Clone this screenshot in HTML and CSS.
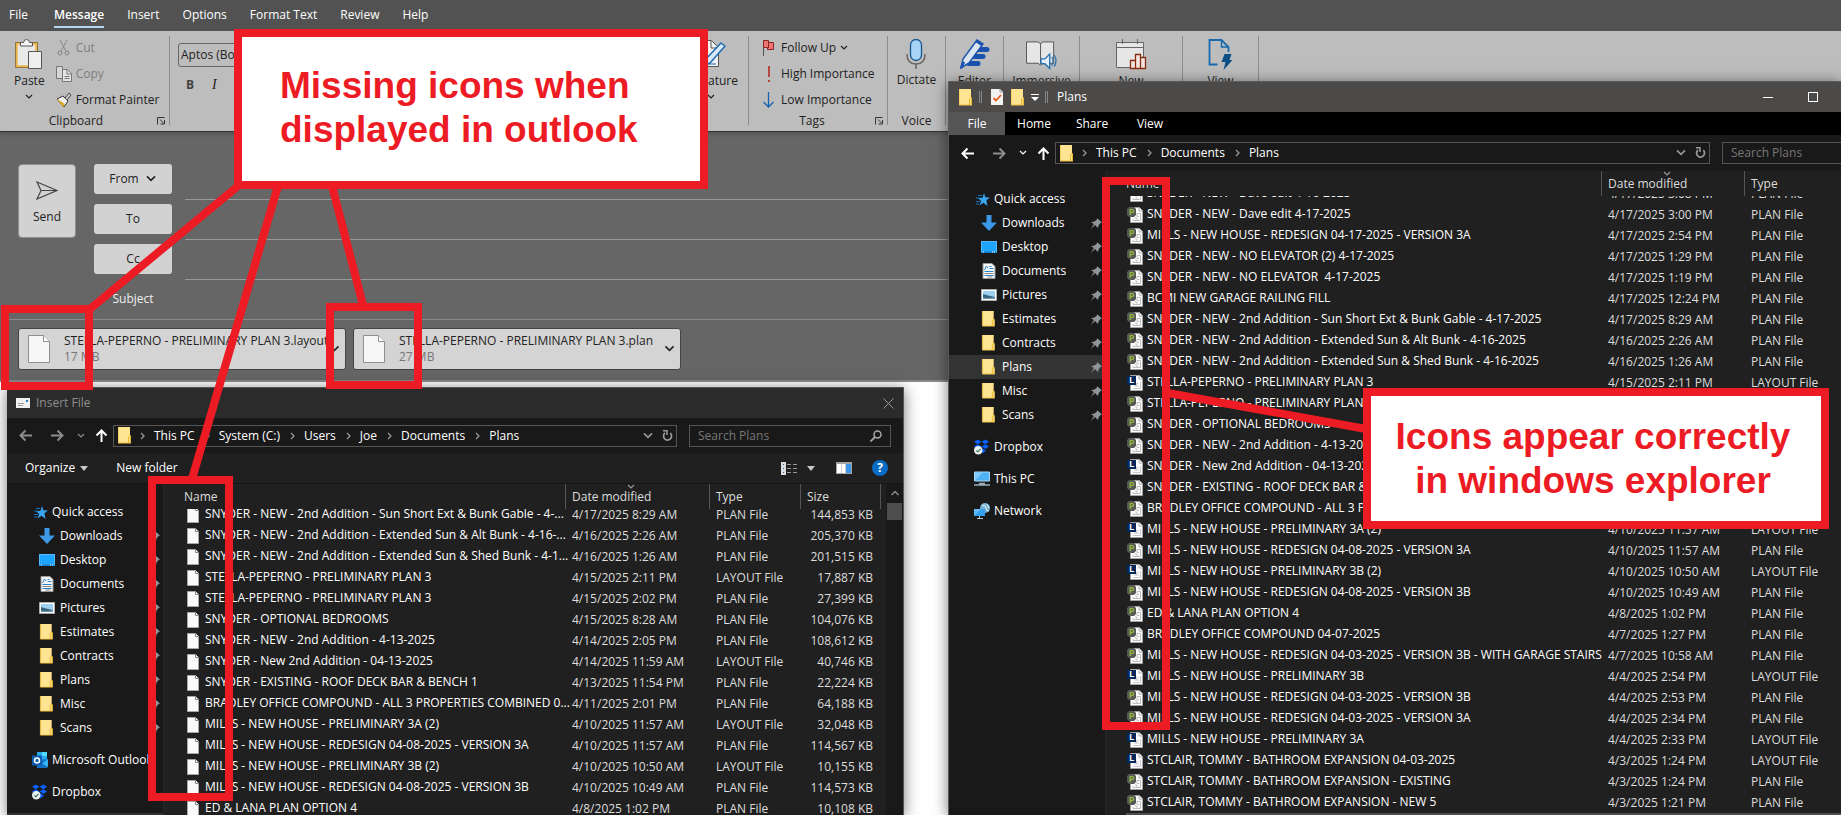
FILE: index.html
```html
<!DOCTYPE html>
<html lang="en">
<head>
<meta charset="utf-8">
<title>Message - Insert File</title>
<link rel="stylesheet" href="styles.css">
</head>
<body>
<svg class="defs" aria-hidden="true">
  <symbol id="folder" viewBox="0 0 14 17"><path d="M0 0h12v9l1 1v6H1L0 16z" fill="#ffe08c"/><path d="M1 1h10v14H1z" fill="#ffe492"/><path d="M0 0v16h13" fill="none" stroke="#efc245" stroke-width="1"/><path d="M10.500 16V10l2-1.500V16" fill="#ffe694" stroke="#e6b52c"/></symbol>
  <symbol id="file" viewBox="0 0 12 16"><path d="M.5.5h8l3 3v12H.5z" fill="#fafafa" stroke="#a8a8a8"/><path d="M8.500.500v3h3" fill="#fff" stroke="#858585"/></symbol>
  <symbol id="plan" viewBox="0 0 16 16"><path d="M3.500.500h9l3 3v12h-12z" fill="#fdfdfd" stroke="#a4a4a4"/><path d="M12 1v3h3" fill="none" stroke="#aaa"/><path d="M6 12v1.500h7.500V6.500H10M10 6.500v3h2M10 13v-2H8" fill="none" stroke="#bdbdbd"/><path d="M2 0h5l2 2v6L7 10H2L0 8V2z" fill="#575957"/><text x="2" y="8" class="badge-p">P</text></symbol>
  <symbol id="layout" viewBox="0 0 16 16"><path d="M3.500.500h9l3 3v12h-12z" fill="#fdfdfd" stroke="#a4a4a4"/><path d="M12 1v3h3" fill="none" stroke="#aaa"/><path d="M6 13.500h7.500V7M7 11h5M9.500 11V8.500h2" fill="none" stroke="#c4c9d0"/><path d="M0 1h9v9H0z" fill="#04285c"/><text x="2" y="8" class="badge-l">L</text></symbol>
  <symbol id="star" viewBox="0 0 14 13"><path d="M8 0l1.400 4.200 4.600.300-3.600 2.700L11.500 13 7.500 9.800 3.500 12.500 5.200 8 2 5.200l4.500-.500z" fill="#39a5f2"/><path d="M2 2.500h4M0 5h4M0 8.500h4M0 11h3" stroke="#1d74b8"/></symbol>
  <symbol id="down" viewBox="0 0 16 16"><path d="M5.500 0h5v7.500H16L8 16 0 7.500h5.500z" fill="#3d98e8"/></symbol>
  <symbol id="desktop" viewBox="0 0 16 12"><path d="M0 0h16v12H0z" fill="#1296f0"/><path d="M.5.5h15v10H.5z" fill="#1ea5ff" stroke="#57b9fa"/><path d="M1 11h14" stroke="#0564b4"/><path d="M2 11h1M11 11h1M13 11h1" stroke="#fff"/></symbol>
  <symbol id="docs" viewBox="0 0 13 16"><path d="M.5.500h9l3 3v12H.5z" fill="#f7f7f7" stroke="#9a9a9a"/><path d="M2 7l2-4 1.500 2M7 3.500h2M7 5.500h4M2 8.500h9M2 12.500h9" fill="none" stroke="#2c83c5"/><path d="M2 10.500h9M5 14h5" stroke="#888"/></symbol>
  <symbol id="pics" viewBox="0 0 16 12"><path d="M.5.500h15v11H.5z" fill="#fff" stroke="#aaa"/><path d="M2 2h12v8H2z" fill="#9dd1f2"/><path d="M2 5l5 1.500L14 8v2H2z" fill="#36647f"/><path d="M2 8.500l6 .5 6-1v2H2z" fill="#6d93a6"/></symbol>
  <symbol id="pin" viewBox="0 0 11 11"><path d="M6 0l5 4.500-1.500.500-2 2.500L7 10 4 7 0 11l2.800-5L0 4l3.500-.500L6 1.500z" fill="#8d969c"/></symbol>
  <symbol id="dropbox" viewBox="0 0 17 16"><path d="M4 0l4 2.500L4 5 0 2.500zM12 0l4 2.500L12 5 8 2.500zM4 5l4 2.500L4 10 0 7.500zM12 5l4 2.500-4 2.500-4-2.500zM8 9l5 3-4.500 3z" fill="#0a61fe"/><circle cx="4.500" cy="11.500" r="4.500" fill="#e9f0ee"/><path d="M2.500 11.500l1.500 1.700 3-3.200" fill="none" stroke="#3a7b60" stroke-width="1.300"/></symbol>
  <symbol id="pc" viewBox="0 0 16 15"><path d="M.5.500h15v9H.5z" fill="#4db1f3" stroke="#a9d9f5"/><path d="M1 9V1h8z" fill="#83cbf8"/><path d="M5 12h6M0 13.500h16" stroke="#9bb0bc" stroke-width="1.500"/></symbol>
  <symbol id="network" viewBox="0 0 16 16"><circle cx="11" cy="5" r="5" fill="#79b2d2"/><path d="M8 2q4 0 4 3t3 3M13 1l2 4" fill="none" stroke="#dceef5"/><path d="M0 6h11v7H0z" fill="#34a1ee"/><path d="M0 13V6h7z" fill="#62bcf7"/><path d="M3 15.500h6M5.500 13v2" stroke="#b5cad6"/></symbol>
  <symbol id="outlook" viewBox="0 0 16 16"><path d="M5 0h10v8H5z" fill="#28a8ea"/><path d="M10 0h5v4h-5z" fill="#50d9ff"/><path d="M4 8l12-1v7l-1 2H5z" fill="#1272c4"/><path d="M16 7v8l-6-3.500z" fill="#38b4f2"/><rect y="3.500" width="10" height="10" fill="#0d5cae"/><circle cx="5" cy="8.500" r="2.500" fill="none" stroke="#fff" stroke-width="1.500"/></symbol>
  <symbol id="back" viewBox="0 0 13 12"><path d="M13 6H1.500M6.500 1l-5 5 5 5" fill="none" stroke="currentColor" stroke-width="2"/></symbol>
  <symbol id="fwd" viewBox="0 0 13 12"><path d="M0 6h11.500M6.500 1l5 5-5 5" fill="none" stroke="currentColor" stroke-width="2"/></symbol>
  <symbol id="up" viewBox="0 0 12 13"><path d="M6 13V1.500M1 6.500l5-5 5 5" fill="none" stroke="currentColor" stroke-width="2"/></symbol>
  <symbol id="chev" viewBox="0 0 8 6"><path d="M1 1l3 3 3-3" fill="none" stroke="currentColor" stroke-width="1.200"/></symbol>
  <symbol id="next" viewBox="0 0 5 8"><path d="M1 1l3 3-3 3" fill="none" stroke="currentColor" stroke-width="1.300"/></symbol>
  <symbol id="reload" viewBox="0 0 11 12"><path d="M8.300 3.200A4 4 0 1 1 3 3" fill="none" stroke="currentColor" stroke-width="1.700"/><path d="M1 .8h4V5" fill="none" stroke="currentColor" stroke-width="1.500"/></symbol>
  <symbol id="launch" viewBox="0 0 9 8"><path d="M.5 7.500v-7h7M3 2.500l4 4M3.500 7h4V3" fill="none" stroke="#333"/></symbol>
  <symbol id="page" viewBox="0 0 22 28"><path d="M.5.500h15l6 6v21H.5z" fill="#f6f6f6" stroke="#8f8f8f"/><path d="M15.500.500v6h6" fill="#fff" stroke="#8f8f8f"/></symbol>
</svg>

<main class="desktop">
  <section class="mail" aria-label="Message">
    <nav class="tabs">
      <button>File</button><button class="on">Message</button><button>Insert</button><button>Options</button><button>Format Text</button><button>Review</button><button>Help</button>
    </nav>
    <div class="ribbon">
      <div class="group clip">
        <div class="tools">
          <button class="big"><svg class="ic-paste" viewBox="0 0 28 31"><path d="M1.500 4.500h20v23h-20z" fill="#e9e9e9" stroke="#eab54a" stroke-width="2.500"/><path d="M.5 3.500h22v25H.5z" fill="none" stroke="#5c4a22" stroke-width=".6"/><path d="M5.500 7V3.500h3q.500-3 3-3t3 3h3V7z" fill="#f4f4f4" stroke="#555"/><path d="M13.500 12.500h13v17h-13z" fill="#eee" stroke="#555"/></svg><span>Paste</span><svg class="chev"><use href="#chev"/></svg></button>
          <div class="stack">
            <button class="off"><svg class="ic16" viewBox="0 0 16 16"><path d="M4 0l6 11M11 0L5 11" stroke="#858585" fill="none"/><circle cx="4" cy="13" r="2" fill="none" stroke="#858585"/><circle cx="11" cy="13" r="2" fill="none" stroke="#858585"/></svg>Cut</button>
            <button class="off"><svg class="ic16" viewBox="0 0 16 16"><path d="M.5.500h6v12h-6z" fill="#d6d6d6" stroke="#777"/><path d="M6.500 3.500h5l4 4v8h-9z" fill="#e4e4e4" stroke="#777"/><path d="M11 4v4h4M8.500 10.500h5M8.500 12.500h5" fill="none" stroke="#777"/></svg>Copy</button>
            <button><svg class="ic16" viewBox="0 0 16 16"><path d="M1 7l6-3 5 5-4 6z" fill="#f2f2f2" stroke="#333"/><path d="M1 7l8 5-2 3z" fill="#e3a823"/><path d="M9 6l4-5 2 2-4 5z" fill="#ccc" stroke="#444"/></svg>Format Painter</button>
          </div>
        </div>
        <div class="caption">Clipboard<button class="launch" aria-label="Clipboard options"><svg><use href="#launch"/></svg></button></div>
      </div>
      <div class="group font">
        <select aria-label="Font"><option>Aptos (Body)</option></select>
        <div class="style"><button class="b">B</button><button class="i">I</button></div>
      </div>
      <div class="group sign">
        <button class="big"><svg class="ic-sign" viewBox="0 0 34 31"><path d="M.5 1.500h17l7 7v19H.5z" fill="#f2f2f2" stroke="#555"/><path d="M17 2v7h7" fill="none" stroke="#555"/><path d="M27 4l4 3-15 17-6 2 2-6z" fill="#d9e9f7" stroke="#2170b5" stroke-width="1.500"/><path d="M3 25h19" stroke="#1b66ad"/></svg><span>Signature</span><svg class="chev"><use href="#chev"/></svg></button>
      </div>
      <div class="group tags">
        <div class="stack">
          <button><svg class="ic16" viewBox="0 0 16 16"><path d="M2.500 0v16" stroke="#555"/><path d="M2.500.500h5v2h5v7h-6v-2h-4z" fill="#ee7474" stroke="#8d2424"/><path d="M7.500 1v7" stroke="#8d2424"/></svg>Follow Up<svg class="chev"><use href="#chev"/></svg></button>
          <button><svg class="ic16" viewBox="0 0 16 16"><path d="M8 0v11M8 14v2" stroke="#b5473f" stroke-width="2"/></svg>High Importance</button>
          <button><svg class="ic16" viewBox="0 0 16 16"><path d="M7.500 0v15M2.500 10l5 5 5-5" fill="none" stroke="#1464b0" stroke-width="1.300"/></svg>Low Importance</button>
        </div>
        <div class="caption">Tags<button class="launch" aria-label="Tag options"><svg><use href="#launch"/></svg></button></div>
      </div>
      <div class="group voice">
        <button class="big"><svg class="ic-mic" viewBox="0 0 20 30"><rect x="4.500" y=".5" width="11" height="21" rx="5.500" fill="#a7d3f5" stroke="#17568f" stroke-width="1.300"/><path d="M1 15q0 10 9 10t9-10M10 25v5" fill="none" stroke="#666" stroke-width="1.500"/></svg><span>Dictate</span></button>
        <div class="caption">Voice</div>
      </div>
      <div class="group editor"><button class="big"><svg class="ic-30" viewBox="0 0 31 31"><path d="M18 8h10a2 2 0 0 1 0 5H16zM14 15h10a2 2 0 0 1 0 5H12zM10 22h9a2 2 0 0 1 0 5H8z" fill="#1a53ae"/><path d="M2 29l2-9L18 1l6 4L10 24z" fill="#dbe5ef" stroke="#1a53ae" stroke-width="1.500"/><path d="M17 2l6 4M2 29l3-6" stroke="#1a53ae" stroke-width="2.500"/></svg><span>Editor</span></button></div>
      <div class="group immersive"><button class="big"><svg class="ic-30" viewBox="0 0 32 31"><path d="M.5 2.500h12l2.500 2 2.500-2h11v22h-11l-2.500 2-2.500-2H.5z" fill="#e6e6e6" stroke="#555"/><path d="M15 4v21" stroke="#555"/><path d="M15.500 20h4l5-5v15l-5-5h-4z" fill="#e3eef7" stroke="#2a73b0" stroke-width="1.400"/><path d="M26.500 18q3 4 0 9M29 16q4 6 0 12" fill="none" stroke="#2a73b0" stroke-width="1.300"/></svg><span>Immersive</span></button></div>
      <div class="group new"><button class="big"><svg class="ic-30" viewBox="0 0 31 31"><path d="M.5 3.500h27v25H.5z" fill="#e6e6e6" stroke="#666"/><path d="M1 8.500h26M6.500 0v5M21.500 0v5" stroke="#666" fill="none"/><path d="M14.500 29.500v-8h5v-6h5v3h5v11zM19.500 22v7M24.500 18v11" fill="#f3e6e0" stroke="#872e12" stroke-width="1.300"/></svg><span>New</span></button></div>
      <div class="group view"><button class="big"><svg class="ic-30" viewBox="0 0 26 31"><path d="M10 25.500H2V1h12l7 7v5" fill="none" stroke="#176aae" stroke-width="1.800"/><path d="M14 1v7h7" fill="none" stroke="#176aae" stroke-width="1.500"/><path d="M17 15h7l-2 6h3l-9 10 2-8h-4z" fill="#0c4f87"/></svg><span>View</span></button></div>
    </div>
    <form class="compose">
      <button type="button" class="send"><svg viewBox="0 0 22 19"><path d="M1 1l20 8.500L1 18l4-8.500zM5 9.500h16" fill="none" stroke="#444" stroke-width="1.200"/></svg>Send</button>
      <button type="button" class="who">From <svg class="chev wide"><use href="#chev"/></svg></button><input aria-label="From">
      <button type="button" class="who">To</button><input aria-label="To">
      <button type="button" class="who">Cc</button><input aria-label="Cc">
      <label for="subject">Subject</label><input id="subject">
    </form>
    <div class="attachments">
      <button class="att"><svg class="ic-page"><use href="#page"/></svg><span class="att-text"><span>STELLA-PEPERNO - PRELIMINARY PLAN 3.layout</span><small>17 MB</small></span><svg class="chev wide"><use href="#chev"/></svg></button>
      <button class="att"><svg class="ic-page"><use href="#page"/></svg><span class="att-text"><span>STELLA-PEPERNO - PRELIMINARY PLAN 3.plan</span><small>27 MB</small></span><svg class="chev wide"><use href="#chev"/></svg></button>
    </div>
  </section>

  <section class="win dialog" aria-label="Insert File">
    <header class="title"><svg class="ic-mail" viewBox="0 0 14 10"><path d="M0 0h14v10H0z" fill="#f0f0f0"/><path d="M2 5.500h6M2 7.500h5" stroke="#999"/><path d="M10 2h2v2h-2z" fill="#2b75bb"/></svg>Insert File<button class="close" aria-label="Close"><svg viewBox="0 0 11 11"><path d="M.5.500l10 10M10.500.500l-10 10" stroke="#999" fill="none"/></svg></button></header>
    <div class="address">
      <button class="nav" aria-label="Back"><svg class="arrow"><use href="#back"/></svg></button><button class="nav" aria-label="Forward"><svg class="arrow"><use href="#fwd"/></svg></button><button class="nav small" aria-label="Recent"><svg class="chev"><use href="#chev"/></svg></button><button class="nav lit" aria-label="Up"><svg class="arrow"><use href="#up"/></svg></button>
      <div class="path"><svg class="ic-folder"><use href="#folder"/></svg><svg class="next"><use href="#next"/></svg><a href="#">This PC</a><svg class="next"><use href="#next"/></svg><a href="#">System (C:)</a><svg class="next"><use href="#next"/></svg><a href="#">Users</a><svg class="next"><use href="#next"/></svg><a href="#">Joe</a><svg class="next"><use href="#next"/></svg><a href="#">Documents</a><svg class="next"><use href="#next"/></svg><a href="#">Plans</a><button class="end" aria-label="Previous locations"><svg class="chev wide"><use href="#chev"/></svg></button><button aria-label="Refresh"><svg class="reload"><use href="#reload"/></svg></button></div>
      <div class="search"><input aria-label="Search Plans" placeholder="Search Plans"><svg class="glass" viewBox="0 0 12 12"><circle cx="7.500" cy="4.500" r="3.500" fill="none" stroke="#a8a8a8" stroke-width="1.500"/><path d="M5 7l-4.500 4.500" stroke="#a8a8a8" stroke-width="1.800"/></svg></div>
    </div>
    <div class="toolbar"><button class="organize">Organize<svg class="tri" viewBox="0 0 8 5"><path d="M0 0h8L4 5z" fill="#c8c8c8"/></svg></button><button>New folder</button>
      <button class="mode" aria-label="Change view"><svg class="ic-view" viewBox="0 0 16 13"><path d="M0 0h5v13H0z" fill="#ddd"/><path d="M2 2h1v1H2zM2 6h1v1H2zM2 10h1v1H2z" fill="#245f9c"/><path d="M6 2.500h4M12 2.500h4M6 6.500h4M12 6.500h4M6 10.500h4M12 10.500h4" stroke="#999"/></svg><svg class="tri" viewBox="0 0 8 5"><path d="M0 0h8L4 5z" fill="#c8c8c8"/></svg></button>
      <button class="pane" aria-label="Preview pane"><svg class="ic-pane" viewBox="0 0 16 12"><path d="M0 0h16v12H0z" fill="#a5a5a5"/><path d="M1 2h4v9H1zM5.500 2h4v9h-4z" fill="#fff"/><path d="M10 2h5v9h-5z" fill="#3c96e8"/></svg></button>
      <button class="help" aria-label="Help">?</button></div>
    <div class="panes">
      <nav class="side">
        <a href="#" class="top"><svg class="ic-star"><use href="#star"/></svg>Quick access</a>
        <a href="#"><svg class="ic16"><use href="#down"/></svg>Downloads<svg class="pin"><use href="#pin"/></svg></a>
        <a href="#"><svg class="ic16"><use href="#desktop"/></svg>Desktop<svg class="pin"><use href="#pin"/></svg></a>
        <a href="#"><svg class="ic16"><use href="#docs"/></svg>Documents<svg class="pin"><use href="#pin"/></svg></a>
        <a href="#"><svg class="ic16"><use href="#pics"/></svg>Pictures<svg class="pin"><use href="#pin"/></svg></a>
        <a href="#"><svg class="ic16"><use href="#folder"/></svg>Estimates<svg class="pin"><use href="#pin"/></svg></a>
        <a href="#"><svg class="ic16"><use href="#folder"/></svg>Contracts<svg class="pin"><use href="#pin"/></svg></a>
        <a href="#"><svg class="ic16"><use href="#folder"/></svg>Plans<svg class="pin"><use href="#pin"/></svg></a>
        <a href="#"><svg class="ic16"><use href="#folder"/></svg>Misc<svg class="pin"><use href="#pin"/></svg></a>
        <a href="#"><svg class="ic16"><use href="#folder"/></svg>Scans<svg class="pin"><use href="#pin"/></svg></a>
        <div class="roots">
          <a href="#"><svg class="ic16"><use href="#outlook"/></svg>Microsoft Outlook</a>
          <a href="#"><svg class="ic16"><use href="#dropbox"/></svg>Dropbox</a>
        </div>
        <div class="side-end"></div>
      </nav>
      <div class="list">
        <div class="heads"><button>Name</button><button>Date modified<svg class="chev sort"><use href="#chev"/></svg></button><button>Type</button><button>Size</button></div>
        <div class="rows">
        <table><colgroup><col class="c-name"><col class="c-date"><col class="c-type"><col class="c-size"></colgroup>
          <tr><td><svg><use href="#file"/></svg>SNYDER - NEW - 2nd Addition - Sun Short Ext &amp; Bunk Gable - 4-...<td>4/17/2025 8:29 AM<td>PLAN File<td>144,853 KB
          <tr><td><svg><use href="#file"/></svg>SNYDER - NEW - 2nd Addition - Extended Sun &amp; Alt Bunk - 4-16-...<td>4/16/2025 2:26 AM<td>PLAN File<td>205,370 KB
          <tr><td><svg><use href="#file"/></svg>SNYDER - NEW - 2nd Addition - Extended Sun &amp; Shed Bunk - 4-1...<td>4/16/2025 1:26 AM<td>PLAN File<td>201,515 KB
          <tr><td><svg><use href="#file"/></svg>STELLA-PEPERNO - PRELIMINARY PLAN 3<td>4/15/2025 2:11 PM<td>LAYOUT File<td>17,887 KB
          <tr><td><svg><use href="#file"/></svg>STELLA-PEPERNO - PRELIMINARY PLAN 3<td>4/15/2025 2:02 PM<td>PLAN File<td>27,399 KB
          <tr><td><svg><use href="#file"/></svg>SNYDER - OPTIONAL BEDROOMS<td>4/15/2025 8:28 AM<td>PLAN File<td>104,076 KB
          <tr><td><svg><use href="#file"/></svg>SNYDER - NEW - 2nd Addition - 4-13-2025<td>4/14/2025 2:05 PM<td>PLAN File<td>108,612 KB
          <tr><td><svg><use href="#file"/></svg>SNYDER - New 2nd Addition - 04-13-2025<td>4/14/2025 11:59 AM<td>LAYOUT File<td>40,746 KB
          <tr><td><svg><use href="#file"/></svg>SNYDER - EXISTING - ROOF DECK BAR &amp; BENCH 1<td>4/13/2025 11:54 PM<td>PLAN File<td>22,224 KB
          <tr><td><svg><use href="#file"/></svg>BRADLEY OFFICE COMPOUND - ALL 3 PROPERTIES COMBINED 0...<td>4/11/2025 2:01 PM<td>PLAN File<td>64,188 KB
          <tr><td><svg><use href="#file"/></svg>MILLS - NEW HOUSE - PRELIMINARY 3A (2)<td>4/10/2025 11:57 AM<td>LAYOUT File<td>32,048 KB
          <tr><td><svg><use href="#file"/></svg>MILLS - NEW HOUSE - REDESIGN 04-08-2025 - VERSION 3A<td>4/10/2025 11:57 AM<td>PLAN File<td>114,567 KB
          <tr><td><svg><use href="#file"/></svg>MILLS - NEW HOUSE - PRELIMINARY 3B (2)<td>4/10/2025 10:50 AM<td>LAYOUT File<td>10,155 KB
          <tr><td><svg><use href="#file"/></svg>MILLS - NEW HOUSE - REDESIGN 04-08-2025 - VERSION 3B<td>4/10/2025 10:49 AM<td>PLAN File<td>114,573 KB
          <tr><td><svg><use href="#file"/></svg>ED &amp; LANA PLAN OPTION 4<td>4/8/2025 1:02 PM<td>PLAN File<td>10,108 KB
        </table>
        </div>
      </div>
      <div class="scroll"><svg viewBox="0 0 8 6"><path d="M.5 5L4 1.500 7.500 5" fill="none" stroke="#8a8a8a" stroke-width="1.500"/></svg><div class="thumb"></div></div>
    </div>
  </section>

  <section class="win explorer" aria-label="Plans">
    <header class="title"><svg class="ic-folder"><use href="#folder"/></svg><i class="bar"></i><svg class="ic-check" viewBox="0 0 12 16"><path d="M0 0h9l3 3v13H0z" fill="#f2f2f2"/><path d="M9 0v3h3" fill="none" stroke="#999"/><path d="M2.500 9l2.500 2.500L10 6" fill="none" stroke="#e2571d" stroke-width="1.800"/></svg><svg class="ic-folder"><use href="#folder"/></svg><svg class="ic-qat" viewBox="0 0 8 7"><path d="M0 .500h8" stroke="#fff"/><path d="M0 3h8L4 7z" fill="#fff"/></svg><i class="bar"></i>Plans
      <button class="min" aria-label="Minimize"></button><button class="max" aria-label="Maximize"></button></header>
    <nav class="menu"><button class="on">File</button><button>Home</button><button>Share</button><button>View</button></nav>
    <div class="address">
      <button class="nav lit" aria-label="Back"><svg class="arrow"><use href="#back"/></svg></button><button class="nav" aria-label="Forward"><svg class="arrow"><use href="#fwd"/></svg></button><button class="nav small lit" aria-label="Recent"><svg class="chev"><use href="#chev"/></svg></button><button class="nav lit" aria-label="Up"><svg class="arrow"><use href="#up"/></svg></button>
      <div class="path"><svg class="ic-folder"><use href="#folder"/></svg><svg class="next"><use href="#next"/></svg><a href="#">This PC</a><svg class="next"><use href="#next"/></svg><a href="#">Documents</a><svg class="next"><use href="#next"/></svg><a href="#">Plans</a><button class="end" aria-label="Previous locations"><svg class="chev wide"><use href="#chev"/></svg></button><button aria-label="Refresh"><svg class="reload"><use href="#reload"/></svg></button></div>
      <div class="search"><input aria-label="Search Plans" placeholder="Search Plans"></div>
    </div>
    <div class="panes">
      <nav class="side">
        <a href="#" class="top"><svg class="ic-star"><use href="#star"/></svg>Quick access</a>
        <a href="#"><svg class="ic16"><use href="#down"/></svg>Downloads<svg class="pin"><use href="#pin"/></svg></a>
        <a href="#"><svg class="ic16"><use href="#desktop"/></svg>Desktop<svg class="pin"><use href="#pin"/></svg></a>
        <a href="#"><svg class="ic16"><use href="#docs"/></svg>Documents<svg class="pin"><use href="#pin"/></svg></a>
        <a href="#"><svg class="ic16"><use href="#pics"/></svg>Pictures<svg class="pin"><use href="#pin"/></svg></a>
        <a href="#"><svg class="ic16"><use href="#folder"/></svg>Estimates<svg class="pin"><use href="#pin"/></svg></a>
        <a href="#"><svg class="ic16"><use href="#folder"/></svg>Contracts<svg class="pin"><use href="#pin"/></svg></a>
        <a href="#" class="on"><svg class="ic16"><use href="#folder"/></svg>Plans<svg class="pin"><use href="#pin"/></svg></a>
        <a href="#"><svg class="ic16"><use href="#folder"/></svg>Misc<svg class="pin"><use href="#pin"/></svg></a>
        <a href="#"><svg class="ic16"><use href="#folder"/></svg>Scans<svg class="pin"><use href="#pin"/></svg></a>
        <div class="roots">
          <a href="#"><svg class="ic16"><use href="#dropbox"/></svg>Dropbox</a>
          <a href="#"><svg class="ic16"><use href="#pc"/></svg>This PC</a>
          <a href="#"><svg class="ic16"><use href="#network"/></svg>Network</a>
        </div>
      </nav>
      <div class="list">
        <div class="heads"><button>Name</button><button>Date modified<svg class="chev sort"><use href="#chev"/></svg></button><button>Type</button></div>
        <div class="rows">
        <table><colgroup><col class="c-name"><col class="c-date"><col></colgroup>
          <tr><td><svg><use href="#plan"/></svg>SNYDER - NEW - Dave edit 4-16-2025<td>4/17/2025 3:08 PM<td>PLAN File
          <tr><td><svg><use href="#plan"/></svg>SNYDER - NEW - Dave edit 4-17-2025<td>4/17/2025 3:00 PM<td>PLAN File
          <tr><td><svg><use href="#plan"/></svg>MILLS - NEW HOUSE - REDESIGN 04-17-2025 - VERSION 3A<td>4/17/2025 2:54 PM<td>PLAN File
          <tr><td><svg><use href="#plan"/></svg>SNYDER - NEW - NO ELEVATOR (2) 4-17-2025<td>4/17/2025 1:29 PM<td>PLAN File
          <tr><td><svg><use href="#plan"/></svg>SNYDER - NEW - NO ELEVATOR&nbsp; 4-17-2025<td>4/17/2025 1:19 PM<td>PLAN File
          <tr><td><svg><use href="#plan"/></svg>BCMI NEW GARAGE RAILING FILL<td>4/17/2025 12:24 PM<td>PLAN File
          <tr><td><svg><use href="#plan"/></svg>SNYDER - NEW - 2nd Addition - Sun Short Ext &amp; Bunk Gable - 4-17-2025<td>4/17/2025 8:29 AM<td>PLAN File
          <tr><td><svg><use href="#plan"/></svg>SNYDER - NEW - 2nd Addition - Extended Sun &amp; Alt Bunk - 4-16-2025<td>4/16/2025 2:26 AM<td>PLAN File
          <tr><td><svg><use href="#plan"/></svg>SNYDER - NEW - 2nd Addition - Extended Sun &amp; Shed Bunk - 4-16-2025<td>4/16/2025 1:26 AM<td>PLAN File
          <tr><td><svg><use href="#layout"/></svg>STELLA-PEPERNO - PRELIMINARY PLAN 3<td>4/15/2025 2:11 PM<td>LAYOUT File
          <tr><td><svg><use href="#plan"/></svg>STELLA-PEPERNO - PRELIMINARY PLAN 3<td>4/15/2025 2:02 PM<td>PLAN File
          <tr><td><svg><use href="#plan"/></svg>SNYDER - OPTIONAL BEDROOMS<td>4/15/2025 8:28 AM<td>PLAN File
          <tr><td><svg><use href="#plan"/></svg>SNYDER - NEW - 2nd Addition - 4-13-2025<td>4/14/2025 2:05 PM<td>PLAN File
          <tr><td><svg><use href="#layout"/></svg>SNYDER - New 2nd Addition - 04-13-2025<td>4/14/2025 11:59 AM<td>LAYOUT File
          <tr><td><svg><use href="#plan"/></svg>SNYDER - EXISTING - ROOF DECK BAR &amp; BENCH 1<td>4/13/2025 11:54 PM<td>PLAN File
          <tr><td><svg><use href="#plan"/></svg>BRADLEY OFFICE COMPOUND - ALL 3 PROPERTIES<td>4/11/2025 2:01 PM<td>PLAN File
          <tr><td><svg><use href="#layout"/></svg>MILLS - NEW HOUSE - PRELIMINARY 3A (2)<td>4/10/2025 11:57 AM<td>LAYOUT File
          <tr><td><svg><use href="#plan"/></svg>MILLS - NEW HOUSE - REDESIGN 04-08-2025 - VERSION 3A<td>4/10/2025 11:57 AM<td>PLAN File
          <tr><td><svg><use href="#layout"/></svg>MILLS - NEW HOUSE - PRELIMINARY 3B (2)<td>4/10/2025 10:50 AM<td>LAYOUT File
          <tr><td><svg><use href="#plan"/></svg>MILLS - NEW HOUSE - REDESIGN 04-08-2025 - VERSION 3B<td>4/10/2025 10:49 AM<td>PLAN File
          <tr><td><svg><use href="#plan"/></svg>ED &amp; LANA PLAN OPTION 4<td>4/8/2025 1:02 PM<td>PLAN File
          <tr><td><svg><use href="#plan"/></svg>BRADLEY OFFICE COMPOUND 04-07-2025<td>4/7/2025 1:27 PM<td>PLAN File
          <tr><td><svg><use href="#plan"/></svg>MILLS - NEW HOUSE - REDESIGN 04-03-2025 - VERSION 3B - WITH GARAGE STAIRS<td>4/7/2025 10:58 AM<td>PLAN File
          <tr><td><svg><use href="#layout"/></svg>MILLS - NEW HOUSE - PRELIMINARY 3B<td>4/4/2025 2:54 PM<td>LAYOUT File
          <tr><td><svg><use href="#plan"/></svg>MILLS - NEW HOUSE - REDESIGN 04-03-2025 - VERSION 3B<td>4/4/2025 2:53 PM<td>PLAN File
          <tr><td><svg><use href="#plan"/></svg>MILLS - NEW HOUSE - REDESIGN 04-03-2025 - VERSION 3A<td>4/4/2025 2:34 PM<td>PLAN File
          <tr><td><svg><use href="#layout"/></svg>MILLS - NEW HOUSE - PRELIMINARY 3A<td>4/4/2025 2:33 PM<td>LAYOUT File
          <tr><td><svg><use href="#layout"/></svg>STCLAIR, TOMMY - BATHROOM EXPANSION 04-03-2025<td>4/3/2025 1:24 PM<td>LAYOUT File
          <tr><td><svg><use href="#plan"/></svg>STCLAIR, TOMMY - BATHROOM EXPANSION - EXISTING<td>4/3/2025 1:24 PM<td>PLAN File
          <tr><td><svg><use href="#plan"/></svg>STCLAIR, TOMMY - BATHROOM EXPANSION - NEW 5<td>4/3/2025 1:21 PM<td>PLAN File
        </table>
        </div>
        <div class="hscroll"></div>
      </div>
    </div>
  </section>

  <svg class="leads" aria-hidden="true"><path d="M238 186L90 309M278 186L192 479M332 186L363 305M1168 393L1366 429" stroke="#ed1c24" stroke-width="8" fill="none"/></svg>
  <div class="mark m1"></div><div class="mark m2"></div><div class="mark m3"></div><div class="mark m4"></div>
  <p class="callout c1">Missing icons when<br>displayed in outlook</p>
  <p class="callout c2">Icons appear correctly<br>in windows explorer</p>
</main>
</body>
</html>
```
FILE: styles.css
```css
* { box-sizing: border-box; }
body { margin: 0; font: 12px/16px "Open Sans", "Noto Sans", sans-serif; color: #fff; background: #fff; }
button, input, select { font: inherit; color: inherit; background: none; border: 0; padding: 0; margin: 0; }
button { display: flex; align-items: center; white-space: nowrap; }
a { color: inherit; text-decoration: none; }
svg { flex: none; }
.defs { position: absolute; width: 0; height: 0; }
.badge-p { font: bold 9px "Liberation Mono", monospace; fill: #93b83c; }
.badge-l { font: bold 9px "Liberation Mono", monospace; fill: #fff; }
.desktop { position: relative; min-height: 100vh; overflow: hidden; }

.chev { width: 8px; height: 6px; }
.chev.wide { width: 12px; height: 8px; }
.ic16 { width: 16px; height: 16px; }
.ic-folder { width: 14px; height: 17px; }

/* Outlook message */
.mail { background: #666; border-bottom: 2px solid #8a8a8a; }
.tabs { display: flex; align-items: flex-end; height: 31px; padding: 0 0 3px 9px; background: #525252; gap: 23px; }
.tabs button { height: 24px; border-bottom: 2px solid transparent; }
.tabs .on { font-weight: 600; margin-left: 3px; border-color: #b4d8f2; }
.ribbon { display: flex; height: 101px; padding: 5px 0 6px; background: #bdbdbd; border-bottom: 1px solid #333; box-shadow: 0 2px 4px #4448; color: #222; position: relative; }
.group { display: flex; flex-direction: column; justify-content: space-between; flex: none; border-right: 1px solid #8c8c8c; }
.clip { width: 170px; }
.tools { display: flex; gap: 11px; padding-left: 14px; }
.big { flex-direction: column; gap: 3px; padding-top: 3px; align-self: center; }
.tools .big { align-self: flex-start; }
.ic-paste { width: 28px; height: 31px; }
.ic-sign { width: 34px; height: 31px; }
.ic-mic { width: 20px; height: 30px; }
.ic-30 { width: 31px; height: 31px; }
.big .chev { margin-top: 2px; }
.stack { display: flex; flex-direction: column; margin-top: -1px; }
.stack button { height: 26px; gap: 4px; }
.off { color: #7d7d7d; }
.caption { display: flex; justify-content: center; position: relative; height: 18px; margin-bottom: -6px; }
.clip .caption { padding-right: 17px; }
.launch { position: absolute; right: 3px; top: 4px; }
.launch svg { width: 9px; height: 8px; }
.font { width: 440px; padding: 7px 8px; justify-content: flex-start; gap: 10px; }
.font select { width: 140px; height: 24px; border: 1px solid #666; border-radius: 3px; padding-left: 2px; appearance: none; }
.style { display: flex; gap: 18px; padding-left: 8px; }
.b { font-weight: 700; color: #444; }
.i { font-family: "Liberation Serif", serif; font-style: italic; font-size: 14px; }
.sign { width: 139px; align-items: flex-end; padding-right: 10px; }
.sign .big { align-self: flex-end; }
.tags { width: 139px; }
.tags .stack { padding-left: 12px; }
.tags .caption { padding-right: 12px; }
.voice { width: 58px; }
.editor { width: 58px; }
.immersive { width: 76px; }
.new { width: 103px; }
.view { width: 76px; }

.compose { display: grid; grid-template-columns: 58px 78px 1fr; grid-auto-rows: 40px; column-gap: 18px; padding: 28px 0 0 18px; color: #222; }
.compose input { border-bottom: 1px solid #999; margin-left: -5px; min-width: 0; color: #fff; outline: 0; }
.send { grid-row: 1 / 5; height: 74px; margin-top: 4px; padding-top: 3px; flex-direction: column; justify-content: center; gap: 9px; background: #d2d2d2; border: 1px solid #8f8f8f; border-radius: 4px; }
.send svg { width: 22px; height: 19px; }
.who { height: 30px; margin-top: 4px; justify-content: center; gap: 6px; background: #d2d2d2; border-radius: 3px; }
.compose label { color: #eee; text-align: center; line-height: 38px; }
.compose #subject { border: 0; }
.attachments { display: flex; gap: 7px; margin: -1px 0 0 9px; padding: 8px 9px 10px; border-top: 1px solid #8a8a8a; }
.att { width: 328px; height: 42px; padding: 0 5px 0 9px; background: #d4d4d4; border: 1px solid #444; border-radius: 3px; color: #222; }
.att .chev { width: 11px; }
.ic-page { width: 22px; height: 28px; margin-right: 14px; }
.att-text { display: flex; flex-direction: column; flex: 1; align-items: flex-start; }
.att small { font-size: 12px; color: #777; }

/* Windows */
.win { position: absolute; bottom: 0; display: flex; flex-direction: column; background: #191919; overflow: hidden; box-shadow: 0 2px 14px #0008; }
.dialog { left: 7px; top: 387px; width: 897px; border: 1px solid #555; border-width: 1px 1px 0 0; }
.explorer { left: 948px; top: 81px; right: 0; border-left: 1px solid #5a5a5a; border-top: 1px solid #5a5a5a; }
.win > * { flex: none; }
.win > .panes { flex: 1; }
.title { display: flex; align-items: center; height: 30px; gap: 6px; }
.dialog .title { padding: 0 9px; background: #2b2b2b; color: #8f8f8f; }
.ic-mail { width: 14px; height: 10px; }
.close { margin-left: auto; }
.close svg { width: 11px; height: 11px; }
.explorer .title { padding: 0 23px 0 10px; background: #4b4a48; }
.bar { width: 3px; height: 12px; margin-right: 3px; border: 1px solid #888; border-width: 0 1px; }
.title .bar + .ic-check { margin-right: 2px; }
.ic-check { width: 12px; height: 16px; }
.ic-qat { width: 8px; height: 7px; }
.min { margin-left: auto; width: 10px; height: 1px; background: #fff; }
.max { width: 10px; height: 10px; margin-left: 29px; border: 1px solid #fff; }
.menu { display: flex; height: 23px; background: #000; }
.menu button { width: 58px; justify-content: center; }
.menu button.on { width: 56px; background: #555; }
.address { display: flex; align-items: center; height: 36px; }
.dialog .address { height: 35px; }
.nav { width: 30px; justify-content: center; color: #8c8c8c; }
.nav:first-child { width: 34px; margin-left: 1px; }
.nav.small { width: 17px; }
.nav.small + .nav { width: 24px; }
.lit { color: #fff; }
.arrow { width: 13px; height: 13px; }
.path { display: flex; align-items: center; height: 22px; border: 1px solid #555; padding: 0 3px 0 4px; }
.path a { margin: 0 10px 0 9px; }
.path .ic-folder { margin-right: 8px; }
.next { width: 5px; height: 8px; color: #999; }
.path button { color: #999; }
.path .end { margin: 0 8px 0 auto; }
.reload { width: 11px; height: 12px; }
.dialog .path { width: 564px; }
.explorer .path { flex: 1; margin-right: 12px; }
.search { display: flex; align-items: center; height: 22px; border: 1px solid #555; padding: 0 8px; }
.search input { flex: 1; min-width: 0; width: 80px; outline: 0; }
.search input::placeholder { color: #777; opacity: 1; }
.dialog .search { width: 202px; margin-left: 12px; }
.explorer .search { width: 119px; border-right: 0; }
.glass { width: 12px; height: 12px; }
.toolbar { display: flex; align-items: center; height: 31px; padding: 0 15px 0 18px; background: #202020; border-bottom: 1px solid #141414; }
.organize { gap: 5px; margin-right: 28px; }
.tri { width: 8px; height: 5px; }
.mode { margin-left: auto; gap: 10px; margin-right: 21px; }
.ic-view { width: 16px; height: 13px; }
.ic-pane { width: 16px; height: 12px; }
.pane { margin-right: 20px; }
.help { width: 16px; height: 16px; border-radius: 8px; background: #0a6bc4; justify-content: center; font-weight: 700; }
.panes { display: flex; min-height: 0; }
.side { display: flex; flex-direction: column; width: 158px; flex: none; padding-top: 16px; border-right: 2px solid #242424; }
.side a { display: flex; align-items: center; height: 24px; padding: 0 3px 0 32px; gap: 5px; white-space: nowrap; }
.side a.top { padding-left: 27px; gap: 4px; }
.roots { padding-top: 4px; }
.side .roots a { height: 32px; padding-left: 25px; gap: 4px; }
.side .ic-star { width: 14px; height: 13px; }
.side .pin { width: 11px; height: 11px; margin-left: auto; }
.side .on { background: #333; }
.side-end { margin-top: auto; height: 2px; background: #333; }
.list { display: flex; flex-direction: column; flex: 1; min-width: 0; background: #202020; }
.heads { display: flex; flex: none; height: 25px; color: #ddd; }
.heads button { position: relative; padding-left: 6px; border-left: 1px solid #555; flex: none; }
.heads button:first-child { padding-left: 19px; border-left: 0; }
.heads .sort { position: absolute; top: 0; left: 61px; color: #999; }
.rows { flex: 1; min-height: 0; overflow: hidden; }
table { width: 100%; table-layout: fixed; border-collapse: collapse; margin-top: -5px; }
td { height: 21px; padding: 0 0 0 7px; white-space: nowrap; color: #ddd; }
td:first-child { color: #fff; padding-left: 22px; }
td svg { width: 12px; height: 16px; margin-right: 6px; vertical-align: middle; }
td:nth-child(4) { text-align: right; padding-right: 13px; }
.c-name, .heads button:nth-child(1) { width: 400px; }
.c-date, .heads button:nth-child(2) { width: 144px; }
.dialog .c-type, .dialog .heads button:nth-child(3) { width: 91px; }
.dialog .heads button:nth-child(4) { width: 81px; border-right: 1px solid #555; }
.scroll { display: flex; flex-direction: column; align-items: center; width: 17px; flex: none; padding-top: 6px; gap: 7px; background: #191919; }
.scroll svg { width: 8px; height: 6px; }
.thumb { width: 15px; height: 17px; background: #4d4d4d; }
.explorer .c-name, .explorer .heads button:nth-child(1) { width: 494px; }
.explorer .c-date, .explorer .heads button:nth-child(2) { width: 143px; }
.explorer table { margin-top: -13px; }
.explorer td svg { width: 16px; margin-right: 4px; }
.explorer td:first-child { padding-left: 20px; }
.hscroll { flex: none; height: 2px; margin-left: 19px; background: #4d4d4d; }

/* Annotations */
.leads { position: absolute; left: 0; top: 0; width: 100%; height: 100%; pointer-events: none; }
.mark { position: absolute; border: 8px solid #ed1c24; pointer-events: none; }
.m1 { left: 1px; top: 305px; width: 92px; height: 85px; }
.m2 { left: 326px; top: 303px; width: 96px; height: 86px; }
.m3 { left: 148px; top: 476px; width: 85px; height: 325px; }
.m4 { left: 1102px; top: 177px; width: 68px; height: 553px; }
.callout { position: absolute; margin: 0; display: flex; align-items: center; background: #fff; border: 8px solid #ed1c24; color: #ed1c24; font: bold 37px/44px "Liberation Sans", Arial, sans-serif; white-space: nowrap; }
.c1 { left: 234px; top: 29px; width: 474px; height: 160px; padding: 0 0 3px 38px; }
.c2 { left: 1363px; top: 388px; width: 466px; height: 141px; padding-right: 6px; justify-content: center; text-align: center; }
```
